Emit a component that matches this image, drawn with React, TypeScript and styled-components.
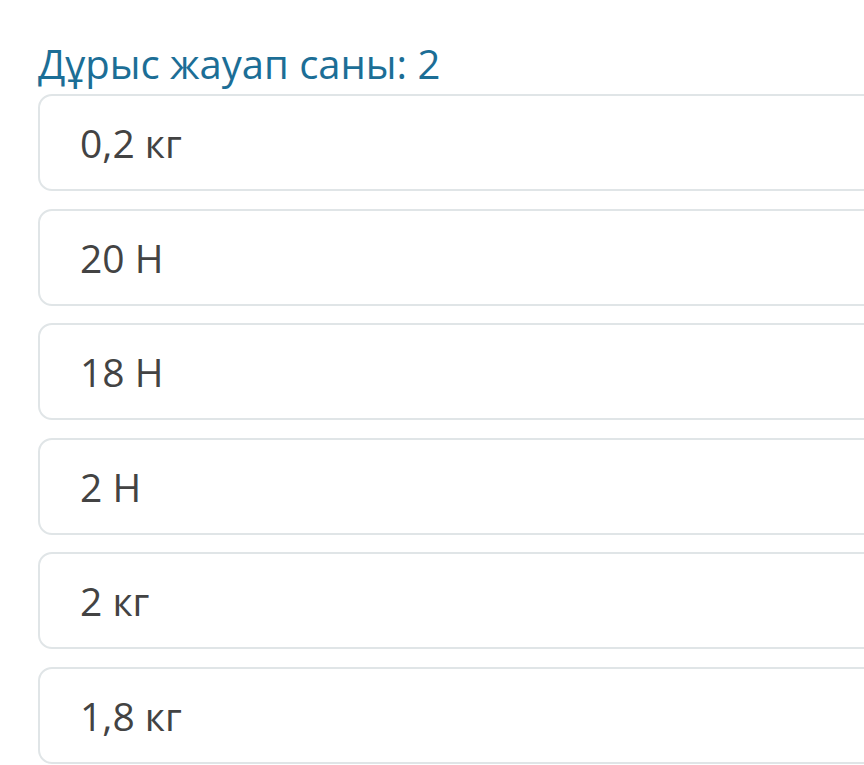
import React from 'react';
import styled, { createGlobalStyle } from 'styled-components';

const GlobalStyle = createGlobalStyle`
  html, body {
    margin: 0;
    padding: 0;
    background: #ffffff;
    overflow: hidden;
  }
  body {
    font-family: 'Open Sans', 'Noto Sans', sans-serif;
  }
`;

const Page = styled.div`
  padding: 38px 0 0 38px;
  width: 900px;
  box-sizing: border-box;
`;

const Title = styled.h2`
  margin: 0 0 4px 0;
  font-size: 40px;
  font-weight: 400;
  line-height: 52px;
  color: #1c6e96;
`;

const OptionList = styled.div`
  display: flex;
  flex-direction: column;
  gap: 17.6px;
`;

const Option = styled.div`
  height: 97px;
  box-sizing: border-box;
  border: 2px solid #e0e5e7;
  border-radius: 14px;
  padding: 0 40px;
  display: flex;
  align-items: center;
  font-size: 39px;
  color: #434343;
  background: #ffffff;
`;

const options = ['0,2 кг', '20 Н', '18 Н', '2 Н', '2 кг', '1,8 кг'];

const App = () => {
  return (
    <>
      <GlobalStyle />
      <Page>
        <Title>Дұрыс жауап саны: 2</Title>
        <OptionList>
          {options.map((o) => (
            <Option key={o}>{o}</Option>
          ))}
        </OptionList>
      </Page>
    </>
  );
};

export default App;
